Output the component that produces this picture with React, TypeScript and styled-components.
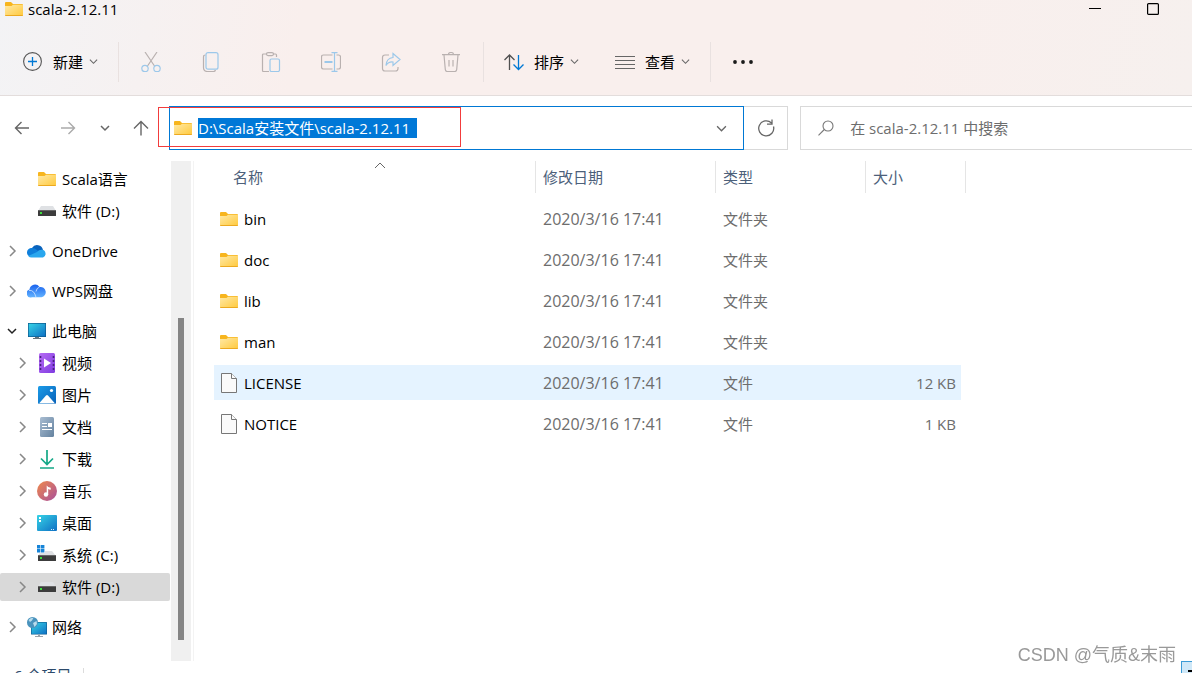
import React from "react";
import styled, { createGlobalStyle } from "styled-components";

const GlobalStyle = createGlobalStyle`
  *, *::before, *::after { box-sizing: border-box; }
  body {
    margin: 0;
    overflow: hidden;
    background: #fff;
    color: #000;
    font: 15px/20px "Open Sans", "Noto Sans CJK SC", sans-serif;
  }
  button, input {
    margin: 0;
    padding: 0;
    border: 0;
    background: none;
    color: inherit;
    font: inherit;
  }
  svg { display: block; flex: none; }
`;

/* The status bar runs a little past the bottom edge of the window. */
const Window = styled.div`
  display: flex;
  flex-direction: column;
  min-height: calc(100vh + 16px);
`;

const Header = styled.header`
  background: linear-gradient(100deg, #f3f3f5 0, #f9efed 300px, #f9efed 75%, #f6f0ee 100%);
  border-bottom: 1px solid #e3dddc;
`;

const TitleBar = styled.div`
  display: flex;
  height: 28px;
  padding: 0 10px 10px 5px;
  align-items: center;
  gap: 5px;
`;

const Title = styled.h1`
  flex: 1;
  margin: 0;
  font-size: 15px;
  font-weight: 400;
`;

const CaptionButtons = styled.div`
  display: flex;
`;

const CaptionButton = styled.button`
  display: grid;
  width: 58px;
  height: 20px;
  place-items: center;
`;

const Toolbar = styled.div`
  display: flex;
  height: 67px;
  align-items: center;
`;

const Divider = styled.span`
  width: 1px;
  height: 40px;
  margin: 0 2px;
  background: #e9e1e0;
`;

const MenuButton = styled.button`
  display: flex;
  padding: 0 18px;
  align-items: center;
  gap: 10px;
  white-space: nowrap;
`;

const NewButton = styled(MenuButton)`
  padding-left: 23px;
`;

const MenuLabel = styled.span`
  display: flex;
  align-items: center;
  gap: 6px;
`;

const IconButton = styled.button<{ $width: number }>`
  display: grid;
  width: ${(p) => p.$width}px;
  height: 40px;
  flex: none;
  place-items: center;
`;

const NavBar = styled.div`
  display: flex;
  height: 64px;
  margin-bottom: 1px;
  align-items: center;
`;

const History = styled.nav`
  display: flex;
  width: 169px;
  flex: none;
  align-items: center;
`;

const AddressBox = styled.div`
  position: relative;
  display: flex;
  height: 44px;
  padding: 0 16px 0 4px;
  flex: 577 1 0;
  align-items: center;
  gap: 6px;
  border: 1px solid #0078d4;
`;

const AddressInput = styled.input`
  height: 20px;
  min-width: 219px;
  field-sizing: content;
  margin-right: auto;
  background: #0078d7;
  color: #fff;
  outline: none;
`;

const RedFrame = styled.span`
  position: absolute;
  top: 0;
  left: -12px;
  width: 303px;
  height: 40px;
  border: 1px solid #f23c3c;
  pointer-events: none;
`;

const RefreshButton = styled.button`
  display: grid;
  width: 44px;
  height: 44px;
  margin-right: 12px;
  flex: none;
  place-items: center;
  border: 1px solid #d9d9d9;
  border-left: 0;
`;

const SearchBox = styled.label`
  display: flex;
  height: 44px;
  padding-left: 17px;
  flex: 390 1 0;
  align-items: center;
  gap: 16px;
  border: 1px solid #d9d9d9;
  border-right: 0;
`;

const SearchInput = styled.input`
  min-width: 0;
  flex: 1;
  outline: none;
  &::placeholder { color: #6d6d6d; opacity: 1; }
`;

const Body = styled.div`
  display: flex;
  flex: 1;
`;

const Sidebar = styled.nav`
  width: 170px;
  padding: 4px 0 20px;
  flex: none;
`;

const Tree = styled.ul`
  display: flex;
  margin: 0;
  padding: 0;
  flex-direction: column;
  gap: 4px;
  list-style: none;
`;

const TreeItem = styled.li<{ $level: number; $spaced?: boolean; $selected?: boolean }>`
  display: flex;
  height: 28px;
  margin-top: ${(p) => (p.$spaced ? 8 : 0)}px;
  padding-left: ${(p) => (p.$level ? 17 : 7)}px;
  align-items: center;
  border-radius: 2px;
  background: ${(p) => (p.$selected ? "#d9d9d9" : "transparent")};
`;

const Expander = styled.button`
  display: grid;
  width: 10px;
  height: 20px;
  margin-right: 10px;
  place-items: center;
`;

const TreeLink = styled.a`
  display: flex;
  align-items: center;
  gap: 5px;
  color: inherit;
  text-decoration: none;
  white-space: nowrap;
`;

const ScrollTrack = styled.div`
  display: flex;
  width: 20px;
  margin: 0 2px 0 1px;
  padding: 157px 0 21px;
  flex: none;
  justify-content: center;
  background: #f0f0f0;
`;

const ScrollThumb = styled.div`
  width: 6px;
  background: #858585;
`;

const Main = styled.main`
  min-width: 0;
  padding-left: 20px;
  flex: 1;
  border-left: 1px solid #f3f3f3;
`;

const FileTable = styled.table`
  width: 752px;
  border-spacing: 0;
  table-layout: fixed;
`;

const HeadCell = styled.th<{ $width: number }>`
  width: ${(p) => p.$width}px;
  padding: 0 0 5px;
  color: #4c607a;
  font-weight: 400;
  text-align: left;
`;

const HeadLabel = styled.div<{ $indent: number }>`
  position: relative;
  height: 32px;
  padding-left: ${(p) => p.$indent}px;
  border-right: 1px solid #e5e5e5;
  line-height: 32px;
`;

const SortMark = styled.span`
  position: absolute;
  top: 0;
  left: 50%;
`;

const FileRow = styled.tr<{ $active?: boolean }>`
  td { background-color: ${(p) => (p.$active ? "#e5f3ff" : "transparent")}; }
`;

const Cell = styled.td`
  height: 41px;
  padding: 0 0 0 7px;
  border: solid transparent;
  border-width: 3px 0;
  background-clip: padding-box;
  color: #6d6d6d;
`;

const NameCell = styled(Cell)`
  padding-left: 6px;
  color: #000;
`;

const DateCell = styled(Cell)`
  font-size: 16px;
`;

const SizeCell = styled(Cell)`
  padding-right: 5px;
  border-right-width: 5px;
  text-align: right;
`;

const FileName = styled.span`
  display: flex;
  align-items: center;
  gap: 6px;
`;

const StatusBar = styled.footer`
  display: flex;
  height: 28px;
  padding-left: 14px;
  flex: none;
  align-items: center;
  color: #2c4a6b;
`;

const StatusDivider = styled.span`
  width: 1px;
  height: 14px;
  margin-left: 12px;
  background: #dcdcdc;
`;

const ViewToggle = styled.button`
  display: flex;
  width: 11px;
  height: 28px;
  margin-left: auto;
  padding: 8px 0 0 6px;
  align-items: flex-start;
  border: solid #3c9bd6;
  border-width: 1px 0 0 1px;
  background: #cfe8f8;
`;

const Watermark = styled.div`
  position: fixed;
  right: 16px;
  bottom: 7px;
  color: #999;
  font: 18px/22px "Liberation Sans", "Noto Sans CJK SC", sans-serif;
`;

/* ---------- icons ---------- */

type ChevronProps = { dir: "down" | "right" | "up"; size?: number; color?: string; width?: number };

const chevronPaths = {
  down: "M1 3 5 7 9 3",
  right: "M3 0 8 5 3 10",
  up: "M0 7 5 2 10 7",
};

const Chevron = ({ dir, size = 10, color = "#666", width = 1.2 }: ChevronProps) => (
  <svg width={size} height={size} viewBox="0 0 10 10" fill="none" stroke={color} strokeWidth={width} overflow="visible">
    <path d={chevronPaths[dir]} />
  </svg>
);

const FolderIcon = ({ box = 18 }: { box?: number }) => (
  <svg width={box} height="14" viewBox={`${(18 - box) / 2} 0 ${box} 14`}>
    <defs>
      <linearGradient id="folder" x1="0" y1="0" x2="1" y2="1">
        <stop offset="0" stopColor="#ffe9a6" />
        <stop offset="1" stopColor="#ffc93c" />
      </linearGradient>
    </defs>
    <path d="M0 1q0-1 1-1h5l2 2h9q1 0 1 1v4H0z" fill="#f7b51e" />
    <path d="M0 4h6.500l1.500-1.200h10V13q0 1-1 1H1q-1 0-1-1z" fill="url(#folder)" />
    <path d="M0 13h18q0 1-1 1H1q-1 0-1-1z" fill="#eca920" />
  </svg>
);

const FileIcon = () => (
  <svg width="18" height="20" viewBox="0 0 18 20" fill="#fafafa" stroke="#777" strokeWidth="1">
    <path d="M1.500 .5h10l5 5v14h-15z" />
    <path d="M11.500 .5v5h5" />
  </svg>
);

const Drive = ({ windows = false }: { windows?: boolean }) => (
  <svg width="20" height="20" viewBox="0 0 20 20">
    <path d={windows ? "M4 6h11l4 5H1z" : "M4 5h12l3 5H1z"} fill="#dfe1e4" />
    <rect x="1" y={windows ? 10 : 9} width="18" height="6" rx=".6" fill="#3c3c3c" />
    <rect x="1" y={windows ? 10 : 9} width="18" height="1" fill="#666" />
    <rect x="3" y={windows ? 12 : 11} width="2" height="2" fill="#3ee03e" />
    {windows && (
      <>
        <path d="M0 0h8v8H0z" fill="#fff" />
        <path d="M0 0h3.400v3.400H0zM4 0h3.400v3.400H4zM0 4h3.400v3.400H0zM4 4h3.400v3.400H4z" fill="#1684d8" />
      </>
    )}
  </svg>
);

const ScreenGradient = () => (
  <defs>
    <linearGradient id="screen" x1="0" y1="0" x2="1" y2="1">
      <stop offset="0" stopColor="#36d3e6" />
      <stop offset="1" stopColor="#0f70c4" />
    </linearGradient>
  </defs>
);

const treeIcons = {
  folder: <FolderIcon box={20} />,
  drive: <Drive />,
  system: <Drive windows />,
  onedrive: (
    <svg width="20" height="20" viewBox="0 0 20 20">
      <path d="M5 7a6 6 0 0 1 11 2l-5 5-8-6z" fill="#0a63bd" />
      <path d="M5 7q3 0 5 2l5 5-7 2H4A4.500 4.500 0 0 1 5 7z" fill="#0f7fdb" />
      <path d="M10 11q2-2.500 5-2.200A4 4 0 0 1 16 16.500H4.500q-2 0-3.300-1.600z" fill="#2aa7ee" />
    </svg>
  ),
  wps: (
    <svg width="20" height="20" viewBox="0 0 20 20">
      <defs>
        <linearGradient id="cloud" x1="0" y1="0" x2="0" y2="1">
          <stop offset="0" stopColor="#1a63ee" />
          <stop offset="1" stopColor="#63b3ff" />
        </linearGradient>
      </defs>
      <path d="M2.500 8.500A5.500 5.500 0 0 1 12.500 6a5 5 0 0 1 2 10.300H5A4 4 0 0 1 2.500 8.500z" fill="url(#cloud)" />
      <path d="M2 9.500Q7 8.500 9 16.300M12.500 6Q9.500 7 9 10.500" fill="none" stroke="#d5e9ff" strokeWidth=".8" />
    </svg>
  ),
  pc: (
    <svg width="20" height="20" viewBox="0 0 20 20">
      <ScreenGradient />
      <rect x="1" y="2" width="18" height="14" fill="#0d5c8f" />
      <rect x="1.700" y="2.700" width="16.600" height="12.600" fill="url(#screen)" />
      <path d="M8 16h4v1h2v1H6v-1h2z" fill="#68737c" />
    </svg>
  ),
  video: (
    <svg width="20" height="20" viewBox="0 0 20 20">
      <defs>
        <linearGradient id="film" x1="0" y1="0" x2="1" y2="1">
          <stop offset="0" stopColor="#b66bf4" />
          <stop offset="1" stopColor="#7f3be0" />
        </linearGradient>
      </defs>
      <rect x="2" width="16" height="20" rx="1.500" fill="url(#film)" />
      <path d="M3.500 3v15M16.500 3v15" stroke="#47207f" strokeWidth="1.600" strokeDasharray="2 2" />
      <path d="M7 5.500 14 10l-7 4.500z" fill="#fff" />
    </svg>
  ),
  picture: (
    <svg width="20" height="20" viewBox="0 0 20 20">
      <defs>
        <linearGradient id="sky" x1="0" y1="0" x2="1" y2="1">
          <stop offset="0" stopColor="#1a9be8" />
          <stop offset="1" stopColor="#0a62b8" />
        </linearGradient>
      </defs>
      <rect x="1" y="1" width="18" height="18" rx="1.500" fill="url(#sky)" />
      <path d="M2 18.500 9 10.500q1-1 2 0l7 8z" fill="#fff" />
      <circle cx="14.500" cy="5.500" r="1.600" fill="#fff" />
    </svg>
  ),
  document: (
    <svg width="20" height="20" viewBox="0 0 20 20">
      <defs>
        <linearGradient id="paper" x1="0" y1="0" x2="1" y2="1">
          <stop offset="0" stopColor="#a9bdd2" />
          <stop offset="1" stopColor="#64829f" />
        </linearGradient>
      </defs>
      <rect x="3" width="14" height="20" rx="1.500" fill="url(#paper)" />
      <path d="M5 6.500h5M5 9.500h5M5 12.500h10" stroke="#fff" strokeWidth="1.200" />
      <rect x="11" y="6" width="4" height="4" fill="#fff" />
    </svg>
  ),
  download: (
    <svg width="20" height="20" viewBox="0 0 20 20" fill="none" stroke="#14a887" strokeWidth="1.700">
      <path d="M10 1v14M4 9.500l6 6 6-6M3 19h14" />
    </svg>
  ),
  music: (
    <svg width="20" height="20" viewBox="0 0 20 20">
      <defs>
        <linearGradient id="disc" x1="0" y1="0" x2="1" y2="1">
          <stop offset="0" stopColor="#f08a4b" />
          <stop offset="1" stopColor="#a84f9c" />
        </linearGradient>
      </defs>
      <circle cx="10" cy="10" r="10" fill="url(#disc)" />
      <circle cx="9" cy="13.500" r="2.200" fill="#fff" />
      <path d="M9.700 13.500V4.500q1 2 4 2.300v2q-1.800 0-2.500-.8v5.500z" fill="#fff" />
    </svg>
  ),
  desktop: (
    <svg width="20" height="20" viewBox="0 0 20 20">
      <ScreenGradient />
      <rect y="2" width="20" height="16" rx="1" fill="url(#screen)" />
      <path d="M2 4h2v2H2zM2 7h2v2H2z" fill="#fff" />
      <path d="M14 16.500h4" stroke="#d6ecff" strokeDasharray="1 1" />
    </svg>
  ),
  network: (
    <svg width="20" height="20" viewBox="0 0 20 20">
      <ScreenGradient />
      <rect x="4" y="5" width="16" height="12.500" rx=".6" fill="#0d5c8f" />
      <rect x="4.600" y="5.600" width="14.800" height="11.300" fill="url(#screen)" />
      <path d="M11 17.500h2v1.500h3v1H8v-1h3z" fill="#9aa3ab" />
      <circle cx="5.500" cy="5.500" r="5.500" fill="#4a93bd" />
      <path d="M1.500 3q2-2.500 5-2.300L5 3.500 3 5zM6 6l3.500-2 .5 3-2.500 3z" fill="#b9dcec" />
    </svg>
  ),
};

const commandIcons = [
  {
    label: "剪切",
    art: (
      <>
        <path d="M4 0 13.500 14M16 0 6.500 14" stroke="#b9b1b0" />
        <circle cx="4" cy="16.500" r="3.200" stroke="#9cc8ea" />
        <circle cx="16" cy="16.500" r="3.200" stroke="#9cc8ea" />
      </>
    ),
  },
  {
    label: "复制",
    art: (
      <>
        <path d="M4.500 3Q2.500 3 2.500 5v10.500q0 4 4 4h6q1.500 0 2-1.500" stroke="#b9b1b0" />
        <rect x="5" y=".7" width="12" height="16.500" rx="2" stroke="#9cc8ea" />
      </>
    ),
  },
  {
    label: "粘贴",
    art: (
      <>
        <path d="M6 2H2.500Q1.500 2 1.500 3v15.500q0 1 1 1H8M12 2h2.500q1 0 1 1v2" stroke="#b9b1b0" />
        <rect x="5.500" y=".6" width="7" height="3" rx="1.500" stroke="#b9b1b0" />
        <rect x="9" y="7" width="9.500" height="12.500" rx="1.500" stroke="#9cc8ea" />
      </>
    ),
  },
  {
    label: "重命名",
    art: (
      <>
        <path d="M11.500 3H2.500Q.5 3 .5 5v10q0 2 2 2h9M15.500 3h2q2 0 2 2v10q0 2-2 2h-2" stroke="#b9b1b0" />
        <path d="M10.500 .7h6M13.500 .7v18.600M10.500 19.300h6" stroke="#9cc8ea" />
        <path d="M3.500 10h8" stroke="#9cc8ea" strokeWidth="2" />
      </>
    ),
  },
  {
    label: "共享",
    art: (
      <>
        <path d="M8 3H4Q1.500 3 1.500 5.500v11Q1.500 19 4 19h10.500q2.500 0 2.500-2.500V15" stroke="#b9b1b0" />
        <path d="M12 1.500 19 7.500l-7 6v-3.500Q7.500 9.500 5 13.500 5.500 6 12 5.500z" stroke="#9cc8ea" />
      </>
    ),
  },
  {
    label: "删除",
    art: (
      <>
        <path d="M1 2.700h18M7.500 2.500q0-2 2.500-2t2.500 2M3 3l1.300 14.500q.2 2 2 2h7.400q1.800 0 2-2L17 3M8 8v6.500M12 8v6.500" stroke="#b9b1b0" />
      </>
    ),
  },
];

const SortIcon = () => (
  <svg width="20" height="20" viewBox="0 0 20 20" fill="none" strokeWidth="1.300">
    <path d="M5.500 18V3M.5 8l5-5 5 5" stroke="#505050" />
    <path d="M14.500 3v15M9.500 12.500l5 5 5-5" stroke="#0078d4" />
  </svg>
);

const ViewIcon = () => (
  <svg width="20" height="20" viewBox="0 0 20 20" stroke="#666" strokeWidth="1">
    <path d="M0 4.500h20M0 8.500h20M0 12.500h20M0 16.500h20" />
  </svg>
);

const NewIcon = () => (
  <svg width="20" height="20" viewBox="0 0 20 20" fill="none">
    <circle cx="9.500" cy="9.500" r="8.900" stroke="#555" strokeWidth="1.100" />
    <path d="M9.500 5v9M5 9.500h9" stroke="#0078d4" strokeWidth="1.300" />
  </svg>
);

type ArrowDir = "left" | "right" | "up";
const arrowPaths: Record<ArrowDir, string> = {
  left: "M15 8H1.500M7.500 2l-6 6 6 6",
  right: "M1 8h13.500M8.500 2l6 6-6 6",
  up: "M8 15.500V1.500M1 8.500l7-7 7 7",
};
const Arrow = ({ dir, color }: { dir: ArrowDir; color: string }) => (
  <svg width="16" height="16" viewBox="0 0 16 16" fill="none" stroke={color} strokeWidth="1.400">
    <path d={arrowPaths[dir]} />
  </svg>
);

/* ---------- data ---------- */

type TreeEntry = {
  label: string;
  icon: keyof typeof treeIcons;
  level: number;
  expander?: "right" | "down";
  spaced?: boolean;
  selected?: boolean;
};

const tree: TreeEntry[] = [
  { label: "Scala语言", icon: "folder", level: 1 },
  { label: "软件 (D:)", icon: "drive", level: 1 },
  { label: "OneDrive", icon: "onedrive", level: 0, expander: "right", spaced: true },
  { label: "WPS网盘", icon: "wps", level: 0, expander: "right", spaced: true },
  { label: "此电脑", icon: "pc", level: 0, expander: "down", spaced: true },
  { label: "视频", icon: "video", level: 1, expander: "right" },
  { label: "图片", icon: "picture", level: 1, expander: "right" },
  { label: "文档", icon: "document", level: 1, expander: "right" },
  { label: "下载", icon: "download", level: 1, expander: "right" },
  { label: "音乐", icon: "music", level: 1, expander: "right" },
  { label: "桌面", icon: "desktop", level: 1, expander: "right" },
  { label: "系统 (C:)", icon: "system", level: 1, expander: "right" },
  { label: "软件 (D:)", icon: "drive", level: 1, expander: "right", selected: true },
  { label: "网络", icon: "network", level: 0, expander: "right", spaced: true },
];

const modified = "2020/3/16 17:41";
const files = [
  { name: "bin", folder: true, size: "" },
  { name: "doc", folder: true, size: "" },
  { name: "lib", folder: true, size: "" },
  { name: "man", folder: true, size: "" },
  { name: "LICENSE", folder: false, size: "12 KB", active: true },
  { name: "NOTICE", folder: false, size: "1 KB" },
];

/* ---------- page ---------- */

export default function App() {
  return (
    <Window>
      <GlobalStyle />
      <Header>
        <TitleBar>
          <FolderIcon />
          <Title>scala-2.12.11</Title>
          <CaptionButtons>
            <CaptionButton aria-label="最小化">
              <svg width="12" height="12" viewBox="0 0 12 12">
                <path d="M0 5.500h12" stroke="#000" />
              </svg>
            </CaptionButton>
            <CaptionButton aria-label="最大化">
              <svg width="12" height="12" viewBox="0 0 12 12">
                <rect x=".6" y=".6" width="10.800" height="10.800" rx="1" fill="none" stroke="#000" strokeWidth="1.200" />
              </svg>
            </CaptionButton>
          </CaptionButtons>
        </TitleBar>
        <Toolbar>
          <NewButton>
            <NewIcon />
            <MenuLabel>
              新建
              <Chevron dir="down" size={9} />
            </MenuLabel>
          </NewButton>
          <Divider />
          {commandIcons.map((c) => (
            <IconButton key={c.label} $width={60} aria-label={c.label} disabled>
              <svg width="20" height="20" viewBox="0 0 20 20" fill="none" strokeWidth="1.200">
                {c.art}
              </svg>
            </IconButton>
          ))}
          <Divider />
          <MenuButton>
            <SortIcon />
            <MenuLabel>
              排序
              <Chevron dir="down" size={9} />
            </MenuLabel>
          </MenuButton>
          <MenuButton>
            <ViewIcon />
            <MenuLabel>
              查看
              <Chevron dir="down" size={9} />
            </MenuLabel>
          </MenuButton>
          <Divider />
          <IconButton $width={60} aria-label="查看更多">
            <svg width="22" height="6" viewBox="0 0 22 6" fill="#1a1a1a">
              <circle cx="3" cy="3" r="1.900" />
              <circle cx="11" cy="3" r="1.900" />
              <circle cx="19" cy="3" r="1.900" />
            </svg>
          </IconButton>
        </Toolbar>
      </Header>

      <NavBar>
        <History>
          <IconButton $width={44} aria-label="后退">
            <Arrow dir="left" color="#666" />
          </IconButton>
          <IconButton $width={48} aria-label="前进">
            <Arrow dir="right" color="#aaa" />
          </IconButton>
          <IconButton $width={26} aria-label="最近浏览的位置">
            <Chevron dir="down" width={1.5} />
          </IconButton>
          <IconButton $width={46} aria-label="上移">
            <Arrow dir="up" color="#666" />
          </IconButton>
        </History>
        <AddressBox>
          <FolderIcon />
          <AddressInput aria-label="地址" defaultValue="D:\Scala安装文件\scala-2.12.11" />
          <button aria-label="以前的位置">
            <Chevron dir="down" size={11} />
          </button>
          <RedFrame />
        </AddressBox>
        <RefreshButton aria-label="刷新">
          <svg width="18" height="18" viewBox="0 0 18 18" fill="none" stroke="#666" strokeWidth="1.300">
            <path d="M16.500 7.500A7.500 7.500 0 1 1 14.500 4M15 .5v4.700h-5" />
          </svg>
        </RefreshButton>
        <SearchBox>
          <svg width="16" height="16" viewBox="0 0 16 16" fill="none" stroke="#777" strokeWidth="1.100">
            <circle cx="10" cy="6" r="5" />
            <path d="M6.300 9.500.5 15.300" />
          </svg>
          <SearchInput aria-label="搜索" placeholder="在 scala-2.12.11 中搜索" />
        </SearchBox>
      </NavBar>

      <Body>
        <Sidebar aria-label="导航窗格">
          <Tree>
            {tree.map((t, i) => (
              <TreeItem key={i} $level={t.level} $spaced={t.spaced} $selected={t.selected}>
                <Expander aria-label={t.label} disabled={!t.expander}>
                  {t.expander && (
                    <Chevron
                      dir={t.expander}
                      color={t.expander === "down" ? "#222" : "#888"}
                      width={1.5}
                    />
                  )}
                </Expander>
                <TreeLink href="#">
                  {treeIcons[t.icon]}
                  {t.label}
                </TreeLink>
              </TreeItem>
            ))}
          </Tree>
        </Sidebar>
        <ScrollTrack aria-hidden>
          <ScrollThumb />
        </ScrollTrack>
        <Main>
          <FileTable>
            <thead>
              <tr>
                <HeadCell $width={322}>
                  <HeadLabel $indent={19}>
                    名称
                    <SortMark>
                      <Chevron dir="up" width={1} />
                    </SortMark>
                  </HeadLabel>
                </HeadCell>
                <HeadCell $width={180}>
                  <HeadLabel $indent={7}>修改日期</HeadLabel>
                </HeadCell>
                <HeadCell $width={150}>
                  <HeadLabel $indent={7}>类型</HeadLabel>
                </HeadCell>
                <HeadCell $width={100}>
                  <HeadLabel $indent={7}>大小</HeadLabel>
                </HeadCell>
              </tr>
            </thead>
            <tbody>
              {files.map((f) => (
                <FileRow key={f.name} $active={f.active}>
                  <NameCell>
                    <FileName>
                      {f.folder ? <FolderIcon /> : <FileIcon />}
                      {f.name}
                    </FileName>
                  </NameCell>
                  <DateCell>{modified}</DateCell>
                  <Cell>{f.folder ? "文件夹" : "文件"}</Cell>
                  <SizeCell>{f.size}</SizeCell>
                </FileRow>
              ))}
            </tbody>
          </FileTable>
        </Main>
      </Body>

      <StatusBar>
        6 个项目
        <StatusDivider />
        <ViewToggle aria-label="详细信息">
          <svg width="4" height="2" viewBox="0 0 4 2">
            <path d="M0 1h4" stroke="#000" strokeWidth="2" />
          </svg>
        </ViewToggle>
      </StatusBar>
      <Watermark>CSDN @气质&amp;末雨</Watermark>
    </Window>
  );
}
